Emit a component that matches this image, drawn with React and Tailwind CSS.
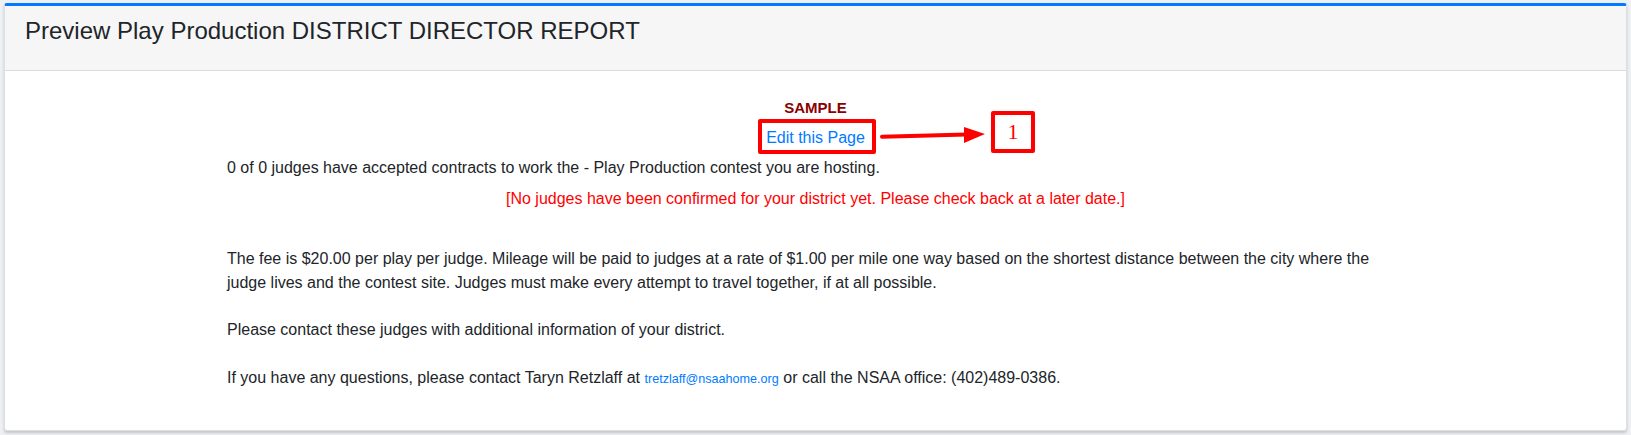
export default function App() {
  const font = { fontFamily: '"Liberation Sans", Arial, sans-serif' };
  return (
    <div className="min-h-[435px] w-full bg-[#eef0f3] pt-[3px] px-[4px] pb-[6px]" style={font}>
      <div className="rounded-[3px] border border-t-[3px] border-[#dcdfe3] border-t-[#007bff] bg-white shadow-[0_2px_3px_rgba(0,0,0,0.18)]">
        <div className="h-[65px] border-b border-[#dcdcdc] bg-[#f6f6f6] px-[20px] pt-[10px]">
          <h3 className="text-[24px] leading-[29px] text-[#212529]">Preview Play Production DISTRICT DIRECTOR REPORT</h3>
        </div>
        <div className="relative flex flex-col items-center pt-[28px] pb-[40px] text-[16px] leading-[24px] text-[#212529]">
          <div className="text-[15px] font-bold leading-[18px] text-[#8b0000]">SAMPLE</div>
          <a href="#" className="mt-[9px] text-[#007bff]">Edit this Page</a>
          <div className="mt-[6px] w-[1177px]">
            <p>0 of 0 judges have accepted contracts to work the - Play Production contest you are hosting.</p>
            <p className="mt-[7px] text-center text-[#ff0000]">[No judges have been confirmed for your district yet. Please check back at a later date.]</p>
            <p className="mt-[36px]">The fee is $20.00 per play per judge. Mileage will be paid to judges at a rate of $1.00 per mile one way based on the shortest distance between the city where the judge lives and the contest site. Judges must make every attempt to travel together, if at all possible.</p>
            <p className="mt-[23px]">Please contact these judges with additional information of your district.</p>
            <p className="mt-[24px] leading-[24px]">
              If you have any questions, please contact Taryn Retzlaff at{" "}
              <a href="#" className="text-[12.6px] leading-[16px] text-[#007bff]">tretzlaff@nsaahome.org</a>{" "}
              or call the NSAA office: (402)489-0386.
            </p>
          </div>

          <div className="pointer-events-none absolute left-[753px] top-[48px] h-[35px] w-[118px] rounded-[2px] border-[4px] border-[#ff0000]"></div>
          <svg className="pointer-events-none absolute left-[870px] top-[50px]" width="120" height="30" viewBox="0 0 120 30">
            <line x1="7" y1="15.7" x2="92" y2="13.5" stroke="#ff0000" strokeWidth="4" strokeLinecap="round" />
            <polygon points="89,6 110,13 89,22" fill="#ff0000" />
          </svg>
          <div className="pointer-events-none absolute left-[986px] top-[40px] flex h-[42px] w-[44px] items-center justify-center rounded-[2px] border-[4px] border-[#ff0000] text-[22px] leading-none text-[#ff0000]" style={{ fontFamily: '"Liberation Serif", "Times New Roman", serif' }}>1</div>
        </div>
      </div>
    </div>
  );
}
